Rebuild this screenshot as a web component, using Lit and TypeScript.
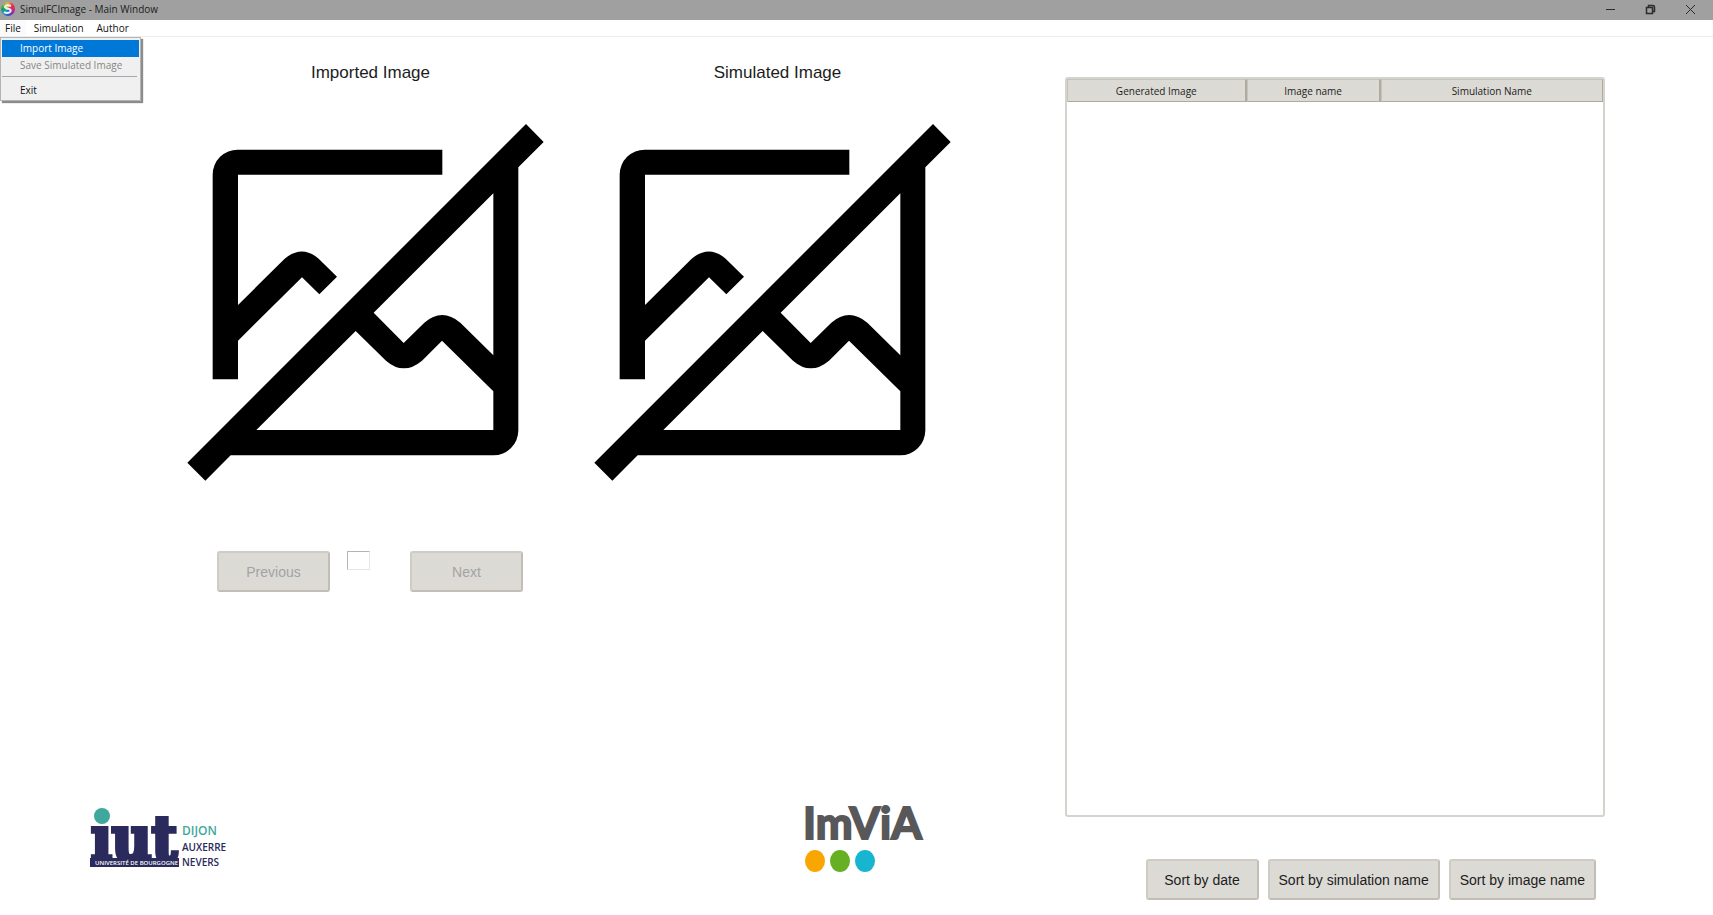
import { LitElement, html, css, svg } from "lit";
import { customElement, property, state } from "lit/decorators.js";

@customElement("image-placeholder")
class ImagePlaceholder extends LitElement {
  @property() label = "";

  static styles = css`
    :host {
      display: block;
      flex: 0 1 357px;
      min-width: 0;
    }
    .figure {
      display: flex;
      flex-direction: column;
      gap: 40px;
      margin: 0;
    }
    .caption {
      padding-left: 10px;
      text-align: center;
      font-size: 17px;
      line-height: 22px;
      color: #1c1c1c;
    }
    .art {
      display: block;
      width: 100%;
    }
  `;

  render() {
    return html`
      <figure class="figure">
        <figcaption class="caption">${this.label}</figcaption>
        <svg class="art" viewBox="50 222 1071 1071" role="img" aria-label="No image">
          <path
            d="M816 299H203A75 75 0 0 0 127 374V988H203V872L395 682L447 733L500 680L445 626Q395 583 343 626L203 765V374H816Z"
          />
          <path
            fill-rule="evenodd"
            d="M1067 222L1120 276L1044 352V1141A75 75 0 0 1 969 1216H181L105 1292L51 1238ZM969 430L610 788L700 879L762 818Q815 772 870 818L969 916ZM969 1024L815 872L755 932Q700 978 647 932L556 843L258 1140H969Z"
          />
        </svg>
      </figure>
    `;
  }
}

const minimizeGlyph = svg`<path d="M0 4.5H9" />`;
const restoreGlyph = svg`<path stroke-width="1.5" d="M.5 2.5H6.5V8.5H.5ZM2.5 2.5V.5H7Q8.500 .5 8.500 2V6.500H6.500" />`;
const closeGlyph = svg`<path d="M0 0L9 9M9 0L0 9" />`;

@customElement("app-root")
class AppRoot extends LitElement {
  @state() fileOpen = true;

  static styles = css`
    :host {
      display: flex;
      flex-direction: column;
      min-height: 100vh;
      background: #fff;
      color: #1c1c1c;
      font-family: "Liberation Sans", Arial, sans-serif;
    }
    * {
      box-sizing: border-box;
    }
    button {
      font: inherit;
      color: inherit;
    }
    .titlebar {
      display: flex;
      align-items: center;
      height: 20px;
      padding: 0 3px 2px 1px;
      background: #a0a0a0;
      font: 10px/16px "Open Sans", "Noto Sans", sans-serif;
    }
    .app-icon {
      width: 14px;
      height: 14px;
      margin-right: 5px;
      border-radius: 50%;
      background: conic-gradient(#f0b030, #e83048, #d82870, #8030b0, #2858c8, #18a0c0, #209858, #80c040, #f0b030);
    }
    .app-icon svg {
      display: block;
    }
    .title {
      flex: 1;
      margin: 0;
      font-size: 10px;
      font-weight: 400;
      line-height: 16px;
    }
    .caption-button {
      display: grid;
      place-items: center;
      width: 40px;
      height: 16px;
      padding: 0;
      border: 0;
      background: none;
    }
    .caption-button svg {
      overflow: visible;
      fill: none;
      stroke: #2b2b2b;
    }
    .menubar {
      position: relative;
      display: flex;
      gap: 3px;
      height: 17px;
      border-bottom: 1px solid #ededed;
      font: 10px/16px "Open Sans", "Noto Sans", sans-serif;
      color: #111;
    }
    .menu-title {
      padding: 0 5px;
      border: 0;
      background: none;
    }
    .menu-title.open {
      background: #fafafa;
    }
    .menu {
      position: absolute;
      z-index: 1;
      top: 17px;
      left: 0;
      width: 141px;
      padding: 2px 1px 1px;
      border: 1px solid #b4b4b4;
      background: #f0f0f0;
      box-shadow: 2px 2px 1px #8c8c8c;
    }
    .menu-item {
      display: block;
      width: 100%;
      height: 17px;
      padding: 0 0 1px 18px;
      border: 0;
      background: none;
      text-align: left;
      line-height: 16px;
    }
    .menu-item.active {
      background: #0078d7;
      color: #fff;
    }
    .menu-item:disabled {
      color: #868686;
    }
    .menu-rule {
      margin: 2px 2px 5px 0;
      border: 0;
      border-top: 1px solid #a8a8a8;
    }
    .main {
      flex: 1;
      display: grid;
      grid-template-columns: minmax(0, 65fr) minmax(0, 36fr);
      padding: 0 108px 15px 90px;
    }
    .viewer {
      display: flex;
      flex-direction: column;
      padding-top: 25px;
    }
    .images {
      display: flex;
      gap: 50px;
      padding: 0 40px 0 97px;
    }
    .pager {
      display: flex;
      align-items: flex-start;
      padding: 70px 0 0 127px;
    }
    .page-number {
      width: 23px;
      height: 19px;
      margin: 0 40px 0 17px;
      padding: 0 2px;
      border: 1px solid #e6e6e6;
      border-top-color: #b4b4b4;
      border-left-color: #b4b4b4;
      font: 12px/16px "Liberation Sans", Arial, sans-serif;
    }
    .push {
      height: 41px;
      padding: 0 9px;
      border: 2px solid #cfccc5;
      border-bottom-color: #c2beb6;
      border-right-color: #c2beb6;
      border-radius: 3px;
      background: #dcdad5;
      font-size: 14px;
      line-height: 20px;
      white-space: nowrap;
    }
    .push.wide {
      width: 113px;
    }
    .push:disabled {
      color: #a3a3a3;
    }
    .logos {
      display: flex;
      justify-content: space-between;
      align-items: center;
      margin-top: auto;
      padding: 0 140px 28px 0;
    }
    .iut,
    .imvia {
      display: block;
      overflow: visible;
    }
    .results {
      display: flex;
      flex-direction: column;
      gap: 42px;
      padding-top: 40px;
    }
    .list {
      flex: 1;
      border: 2px solid #d5d3cd;
      border-radius: 3px;
    }
    .table {
      width: 100%;
      border-collapse: separate;
      border-spacing: 0;
      table-layout: fixed;
      font: 10px/20px "Open Sans", "Noto Sans", sans-serif;
    }
    .heading {
      height: 23px;
      padding: 0;
      border: 1px solid #aeaba0;
      border-top-color: #c6c3ba;
      border-left-color: #c6c3ba;
      background: #dcdad5;
      font-weight: 400;
    }
    .heading:not(:last-child) {
      border-right-width: 2px;
    }
    .col-generated {
      width: 33.5%;
    }
    .col-image {
      width: 25%;
    }
    .sorting {
      display: flex;
      justify-content: flex-end;
      gap: 9px;
      padding-right: 9px;
    }
  `;

  captionButton(name: string, glyph: unknown) {
    return html`
      <button class="caption-button" aria-label=${name}>
        <svg width="9" height="9" viewBox="0 0 9 9">${glyph}</svg>
      </button>
    `;
  }

  renderIut() {
    return html`
      <svg class="iut" width="136" height="60" viewBox="0 0 136 60" role="img" aria-label="IUT Dijon Auxerre Nevers">
        <circle cx="12" cy="8" r="8" fill="#3fa79c" />
        <text
          x="1" y="52" fill="#2a2a5c" stroke="#2a2a5c" stroke-width="4"
          font-family="DejaVu Serif Condensed, DejaVu Serif, serif"
          font-weight="700" font-size="61"
        >ıut</text>
        <rect x="0" y="50" width="89" height="9" fill="#2a2a5c" />
        <text x="5" y="57" fill="#fff" font-family="Open Sans, sans-serif" font-weight="600" font-size="6">UNIVERSITÉ DE BOURGOGNE</text>
        <g font-family="Open Sans, sans-serif" font-weight="600" fill="#2a2a5c">
          <text x="92" y="27" font-size="12" fill="#3fa79c">DIJON</text>
          <text x="92" y="43" font-size="10">AUXERRE</text>
          <text x="92" y="58" font-size="10">NEVERS</text>
        </g>
      </svg>
    `;
  }

  renderImvia() {
    return html`
      <svg class="imvia" width="120" height="68" viewBox="0 0 120 68" role="img" aria-label="ImViA">
        <text
          x="-2" y="35" fill="#58585a" stroke="#58585a" stroke-width="2" font-size="44" font-weight="700"
          font-family="Lato, sans-serif"
        >ImViA</text>
        <ellipse cx="10" cy="57" rx="10" ry="11" fill="#f9a600" />
        <ellipse cx="35" cy="57" rx="10" ry="11" fill="#66b023" />
        <ellipse cx="60" cy="57" rx="10" ry="11" fill="#17b5cf" />
      </svg>
    `;
  }

  render() {
    return html`
      <header class="titlebar">
        <span class="app-icon">
          <svg width="14" height="14" viewBox="0 0 14 14" fill="none" stroke="#e8f4f4" stroke-width="2">
            <path d="M10 4Q5 2 4 5Q5 7 8 7Q11 8 9 10Q6 12 3 10" />
          </svg>
        </span>
        <h1 class="title">SimulFCImage - Main Window</h1>
        ${this.captionButton("Minimize", minimizeGlyph)}
        ${this.captionButton("Restore", restoreGlyph)}
        ${this.captionButton("Close", closeGlyph)}
      </header>
      <nav class="menubar">
        <button
          class="menu-title ${this.fileOpen ? "open" : ""}"
          aria-expanded=${this.fileOpen}
          @click=${() => (this.fileOpen = !this.fileOpen)}
        >File</button>
        <button class="menu-title">Simulation</button>
        <button class="menu-title">Author</button>
        ${this.fileOpen
          ? html`
              <div class="menu" role="menu">
                <button class="menu-item active" role="menuitem">Import Image</button>
                <button class="menu-item" role="menuitem" disabled>Save Simulated Image</button>
                <hr class="menu-rule" />
                <button class="menu-item" role="menuitem">Exit</button>
              </div>
            `
          : null}
      </nav>
      <main class="main">
        <section class="viewer">
          <div class="images">
            <image-placeholder label="Imported Image"></image-placeholder>
            <image-placeholder label="Simulated Image"></image-placeholder>
          </div>
          <div class="pager">
            <button class="push wide" disabled>Previous</button>
            <input class="page-number" type="text" aria-label="Image number" />
            <button class="push wide" disabled>Next</button>
          </div>
          <div class="logos">${this.renderIut()} ${this.renderImvia()}</div>
        </section>
        <section class="results">
          <div class="list">
            <table class="table">
              <thead>
                <tr>
                  <th class="heading col-generated" scope="col">Generated Image</th>
                  <th class="heading col-image" scope="col">Image name</th>
                  <th class="heading" scope="col">Simulation Name</th>
                </tr>
              </thead>
              <tbody></tbody>
            </table>
          </div>
          <div class="sorting">
            <button class="push wide">Sort by date</button>
            <button class="push">Sort by simulation name</button>
            <button class="push">Sort by image name</button>
          </div>
        </section>
      </main>
    `;
  }
}
